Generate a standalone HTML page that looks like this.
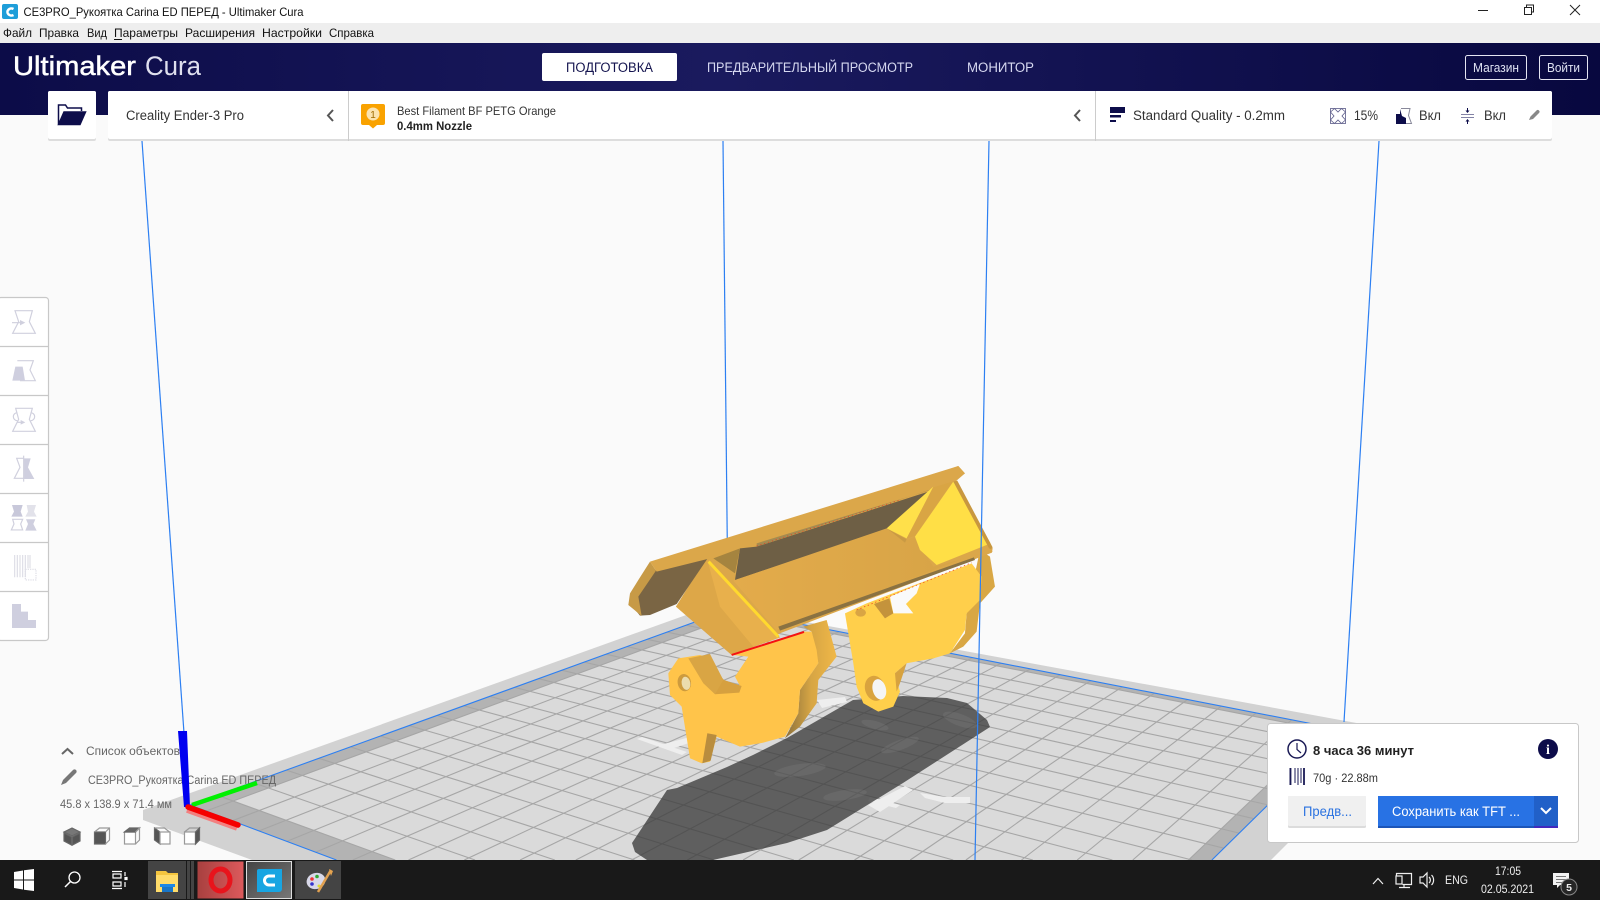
<!DOCTYPE html>
<html lang="ru"><head><meta charset="utf-8"><title>Ultimaker Cura</title>
<style>
html,body{margin:0;padding:0;background:#fafafa;width:1600px;height:900px;overflow:hidden}
svg{display:block;position:absolute;left:0;top:0}
text{font-family:"Liberation Sans","Noto Sans CJK JP",sans-serif;font-size:13px;fill:#222}
</style></head><body>
<svg xmlns="http://www.w3.org/2000/svg" width="1600" height="900" viewBox="0 0 1600 900">
<defs>
<linearGradient id="hd" x1="0" x2="1" y1="0" y2="0"><stop offset="0" stop-color="#0c0c48"/><stop offset=".45" stop-color="#1a1a5e"/><stop offset="1" stop-color="#08083f"/></linearGradient>
<linearGradient id="op" x1="0" x2="1" y1="0" y2="0"><stop offset="0" stop-color="#a8403f"/><stop offset="1" stop-color="#dc5a5c"/></linearGradient>
<linearGradient id="cu" x1="0" x2="1" y1="0" y2="1"><stop offset="0" stop-color="#444"/><stop offset="1" stop-color="#777"/></linearGradient>
<linearGradient id="tube" x1="0" x2="1" y1="0" y2="0"><stop offset="0" stop-color="#e3ab4b"/><stop offset="1" stop-color="#d6a346"/></linearGradient>
<linearGradient id="side" x1="0" x2="1" y1="0" y2="0"><stop offset="0" stop-color="#8a6f3c"/><stop offset=".5" stop-color="#d6a544"/><stop offset="1" stop-color="#f0b848"/></linearGradient>
</defs>
<rect width="1600" height="900" fill="#fafafa"/>

<!-- build plate -->
<polygon points="143,810 714,605 1400,731 1271,860 252,860 143,820" fill="#d2d2d2"/>
<g id="plate"></g>

<!-- floor highlights -->
<g fill="#eeeeee">
<polygon points="637,739 642,737 687,752 682,755"/>
<polygon points="660,745 690,737 695,741 668,750"/>
<polygon points="817,700 845,697 847,702 822,708"/>
<polygon points="868,805 905,786 913,790 880,812"/>
<polygon points="870,797 900,805 896,808 868,801"/>
<polygon points="920,793 945,797 970,797 970,803 945,803 925,798"/>
</g>

<!-- shadow -->
<polygon fill="#3c3c3c" fill-opacity=".78" points="853,700 787,738 753,755 727,767 677,788 667,790 632,843 635,852 647,860 713,860 787,843 827,830 903,783 990,727 987,720 967,703 947,698 903,696"/>
<g fill="#8a8a8a" fill-opacity=".22">
<ellipse cx="800" cy="770" rx="26" ry="6" transform="rotate(-8 800 770)"/>
<ellipse cx="845" cy="795" rx="22" ry="5" transform="rotate(-8 845 795)"/>
<ellipse cx="960" cy="720" rx="18" ry="6" transform="rotate(20 960 720)"/>
<ellipse cx="900" cy="745" rx="20" ry="5" transform="rotate(-20 900 745)"/>
<ellipse cx="875" cy="725" rx="14" ry="4" transform="rotate(15 875 725)"/>
</g>

<!-- vertical line behind model -->
<line x1="723" y1="141" x2="728" y2="610" stroke="#2c7ff2" stroke-width="1.2"/>

<!-- model -->
<g transform="translate(600 450) scale(.3333)">
 <!-- right leg -->
 <polygon fill="#d9a744" points="1050,610 1090,590 1130,545 1140,460 1185,410 1170,320 1140,300 1100,490 1095,550"/>
 <polygon fill="#ffcf4b" points="735,490 760,640 770,710 790,760 835,785 880,770 900,725 885,670 920,640 1000,625 1050,610 1095,540 1100,490 1140,450 1145,380 1115,340 800,460"/>
 <polygon fill="#d7a23f" points="885,670 920,640 900,700 890,725"/>
 <ellipse cx="825" cy="715" rx="30" ry="38" fill="#d9a33e" transform="rotate(-15 825 715)"/>
 <ellipse cx="838" cy="718" rx="20" ry="31" fill="#f5f5f5" transform="rotate(-15 838 718)"/>
 <polygon fill="#fafafa" points="870,440 960,402 950,430 918,462 940,490 880,490"/>
 <polygon fill="#c4933c" points="822,462 868,445 880,490 855,505"/>
 <ellipse cx="782" cy="488" rx="16" ry="12" fill="#d9a544"/>
 <!-- left leg -->
 <polygon fill="url(#side)" points="610,530 680,510 710,620 655,690 650,760 600,830 555,865 595,790 600,720 655,640 635,545"/>
 <polygon fill="#ffc44a" points="205,670 235,625 300,615 330,625 370,690 420,708 405,680 445,620 400,615 610,545 635,545 650,600 655,640 600,720 595,790 555,860 490,878 420,890 350,860 330,935 305,940 270,925 245,770 210,735"/>
 <polygon fill="#d6a03f" points="355,672 372,690 425,708 418,728 345,733"/>
 <polygon fill="#d9a544" points="265,625 330,612 370,690 345,733 310,700"/>
 <ellipse cx="253" cy="698" rx="20" ry="26" fill="#cd9b3e" transform="rotate(-10 253 698)"/>
 <ellipse cx="258" cy="700" rx="13" ry="20" fill="#ebdcae" transform="rotate(-10 258 700)"/>
 <polygon fill="#b98d3e" points="322,850 350,855 332,932 307,940"/>
 <!-- body underlay -->
 <polygon fill="#dba74a" points="320,320 1075,48 1095,70 1060,100 1178,295 1176,308 545,548 395,615 228,470"/>
 <!-- flange -->
 <polygon fill="#7a6544" points="165,360 325,322 230,462 150,495 120,497 90,460 115,400"/>
 <polygon fill="#c79a46" points="150,335 168,362 115,440 125,498 85,465 90,430 115,390"/>
 <polygon fill="#dba74a" points="150,335 1075,48 1095,70 1000,115 470,275 420,295 330,325 170,365"/>
 <polygon fill="#a58a50" points="470,280 985,122 1000,116 470,290"/>
 <!-- interior -->
 <polygon fill="#6e5f45" points="420,295 470,290 985,125 870,235 405,390"/>
 <polygon fill="#a5843f" points="340,325 420,295 405,370"/>
 <!-- tube -->
 <polygon fill="url(#tube)" points="400,392 860,235 920,270 945,260 1000,350 1125,318 530,542"/>
 <polygon fill="#c99a44" points="860,235 920,268 915,278 880,250"/>
 <polygon fill="#ffdf46" points="945,260 1060,95 1172,280 1010,345 960,300"/>
 <polygon fill="#ffe04a" points="860,235 1000,110 920,265"/>
 <polygon fill="#d9a544" points="920,265 1000,112 1058,95 945,258"/>
 <polygon fill="#c8973f" points="1060,95 1072,92 1178,292 1170,300"/>
 <polygon fill="#dba74a" points="530,540 1170,295 1178,305 545,545"/>
 <polygon fill="#8a7242" points="535,530 1122,322 1125,330 540,542"/>
 <!-- left face -->
 <polygon fill="#dda748" points="228,470 322,330 540,562 395,615"/>
 <polygon fill="#e8b04c" points="322,330 410,420 540,562 460,590 360,470"/>
 <line x1="326" y1="335" x2="535" y2="560" stroke="#ffd92e" stroke-width="9"/>
 <!-- red -->
 <line x1="470" y1="288" x2="900" y2="150" stroke="#ef2a1a" stroke-width="2" stroke-dasharray="3 9"/>
 <line x1="395" y1="615" x2="612" y2="546" stroke="#f51212" stroke-width="6"/>
 <line x1="770" y1="480" x2="1115" y2="338" stroke="#ef2a1a" stroke-width="2" stroke-dasharray="4 8"/>
</g>

<!-- front vertical lines + outer verticals -->
<g stroke="#2c7ff2" stroke-width="1.2" fill="none">
<line x1="142" y1="141" x2="184" y2="733"/>
<line x1="1379" y1="141" x2="1344" y2="722"/>
<line x1="989" y1="141" x2="975" y2="860"/>
</g>

<!-- left object list -->
<polyline points="62,754 67.500,749 73,754" fill="none" stroke="#666" stroke-width="2"/>
<text x="86" y="755" font-size="11.500" style="fill:#666;font-size:11.500px" textLength="94" lengthAdjust="spacingAndGlyphs">Список объектов</text>
<path d="M61,785 l2,-5 l10,-10 a2,2 0 0 1 3,3 l-10,10 z" fill="#777"/>
<text x="88" y="784" style="fill:#666;font-size:11.500px" textLength="188" lengthAdjust="spacingAndGlyphs">СЕ3PRO_Рукоятка Carina ED ПЕРЕД</text>
<text x="60" y="808" style="fill:#666;font-size:11.500px" textLength="112" lengthAdjust="spacingAndGlyphs">45.8 x 138.9 x 71.4 мм</text>
<!-- cube icons -->
<g stroke="#666" stroke-width="1.2">
<g><polygon points="72,828 80,832 72,836 64,832" fill="#777"/><polygon points="64,833 71.500,837 71.500,845 64,841" fill="#555"/><polygon points="80,833 72.500,837 72.500,845 80,841" fill="#555"/></g>
<g><rect x="94.500" y="832" width="11" height="12" fill="#555"/><path d="M94.500,832 l5,-4 h10 v12 l-4,4 M105.500,832 l4,-4" fill="none" stroke="#999"/></g>
<g><rect x="124.500" y="832" width="11" height="12" fill="#fff" stroke="#999"/><polygon points="124.500,832 129.500,828 139.500,828 135.500,832" fill="#666"/><path d="M135.500,832 l4,-4 v12 l-4,4" fill="none" stroke="#999"/></g>
<g><polygon points="154.500,828 160,832 160,844 154.500,840" fill="#555"/><rect x="160" y="832" width="10" height="12" fill="#fff" stroke="#999"/><path d="M154.500,828 h10 l5,4" fill="none" stroke="#999"/></g>
<g><rect x="184.500" y="832" width="11" height="12" fill="#fff" stroke="#999"/><path d="M184.500,832 l5,-4 h10 l-4,4" fill="none" stroke="#999"/><polygon points="195.500,832 199.500,828 199.500,840 195.500,844" fill="#555"/></g>
</g>

<!-- axes -->
<polygon points="178,731 187,731 190,807 184,807" fill="#0000f0"/>
<line x1="192" y1="805" x2="257" y2="783" stroke="#00f000" stroke-width="4.500"/>
<line x1="187" y1="810" x2="237" y2="828" stroke="#f28080" stroke-width="5.500"/>
<line x1="188" y1="807" x2="238" y2="825" stroke="#f50000" stroke-width="5.500" stroke-linecap="round"/>

<!-- title bar -->
<rect width="1600" height="23" fill="#fff"/>
<rect x="2" y="4" width="16" height="15" rx="2" fill="#1e9ed9"/>
<path d="M13.500,9 a4,3.500 0 1 0 0,6" fill="none" stroke="#fff" stroke-width="2.500"/>
<text x="23.500" y="16" style="font-size:12px;fill:#111" textLength="280" lengthAdjust="spacingAndGlyphs">СЕ3PRO_Рукоятка Carina ED ПЕРЕД - Ultimaker Cura</text>
<line x1="1478" x2="1488" y1="10.500" y2="10.500" stroke="#222"/>
<path d="M1524.500,7.500 h7 v7 h-7 z M1526.500,7 v-2 h7 v7 h-2" fill="none" stroke="#222"/>
<path d="M1570,5 l10,10 M1580,5 l-10,10" stroke="#222" fill="none"/>
<!-- menu -->
<rect y="23" width="1600" height="20" fill="#eeeeee"/>
<g style="font-size:12px">
<text x="3" y="37" style="font-size:12px;fill:#111" textLength="29" lengthAdjust="spacingAndGlyphs">Файл</text>
<text x="39" y="37" style="font-size:12px;fill:#111" textLength="40" lengthAdjust="spacingAndGlyphs">Правка</text>
<text x="87" y="37" style="font-size:12px;fill:#111" textLength="20" lengthAdjust="spacingAndGlyphs">Вид</text>
<text x="114" y="37" style="font-size:12px;fill:#111" textLength="64" lengthAdjust="spacingAndGlyphs">Параметры</text>
<line x1="114" x2="122" y1="39.500" y2="39.500" stroke="#111"/>
<text x="185" y="37" style="font-size:12px;fill:#111" textLength="70" lengthAdjust="spacingAndGlyphs">Расширения</text>
<text x="262" y="37" style="font-size:12px;fill:#111" textLength="60" lengthAdjust="spacingAndGlyphs">Настройки</text>
<text x="329" y="37" style="font-size:12px;fill:#111" textLength="45" lengthAdjust="spacingAndGlyphs">Справка</text>
</g>

<!-- header -->
<rect y="43" width="1600" height="72" fill="url(#hd)"/>
<text x="13" y="75" style="font-size:27px;fill:#fff;stroke:#fff;stroke-width:.5px" textLength="123" lengthAdjust="spacingAndGlyphs">Ultimaker</text>
<text x="145" y="75" style="font-size:27px;fill:#dfe0ee" textLength="56" lengthAdjust="spacingAndGlyphs">Cura</text>
<rect x="542" y="53" width="135" height="28" rx="2" fill="#fff"/>
<text x="566" y="72" style="font-size:13.500px;fill:#14144f" textLength="87" lengthAdjust="spacingAndGlyphs">ПОДГОТОВКА</text>
<text x="707" y="72" style="font-size:13.500px;fill:#d6d8f0" textLength="206" lengthAdjust="spacingAndGlyphs">ПРЕДВАРИТЕЛЬНЫЙ ПРОСМОТР</text>
<text x="967" y="72" style="font-size:13.500px;fill:#d6d8f0" textLength="67" lengthAdjust="spacingAndGlyphs">МОНИТОР</text>
<rect x="1465.500" y="55.500" width="61" height="24" rx="2" fill="none" stroke="#e5e5f2"/>
<text x="1473" y="72" style="font-size:12.500px;fill:#dfe2f2" textLength="46" lengthAdjust="spacingAndGlyphs">Магазин</text>
<rect x="1539.500" y="55.500" width="48" height="24" rx="2" fill="none" stroke="#e5e5f2"/>
<text x="1547" y="72" style="font-size:12.500px;fill:#dfe2f2" textLength="33" lengthAdjust="spacingAndGlyphs">Войти</text>

<!-- top cards -->
<rect x="48" y="91" width="48" height="50" rx="2" fill="#ddd"/>
<rect x="48" y="91" width="48" height="48" rx="2" fill="#fff"/>
<path d="M58.500,124.500 V105 h7 l2,3 h14 v3 M58.500,124.500 L64,112 H85.500 L80,124.500 Z" fill="none" stroke="#0d0d4a" stroke-width="1.500"/>
<polygon points="59,124.500 64.500,112 85.500,112 80,124.500" fill="#0d0d4a"/>

<rect x="108" y="91" width="1444" height="50" rx="2" fill="#ddd"/>
<rect x="108" y="91" width="1444" height="48" rx="2" fill="#fff"/>
<line x1="348.500" x2="348.500" y1="91" y2="141" stroke="#ccc"/>
<line x1="1095.500" x2="1095.500" y1="91" y2="141" stroke="#ccc"/>
<text x="126" y="120" style="font-size:13.500px;fill:#333" textLength="118" lengthAdjust="spacingAndGlyphs">Creality Ender-3 Pro</text>
<polyline points="333,110 328,115.500 333,121" fill="none" stroke="#555" stroke-width="2"/>
<path d="M363,104 h20 a2,2 0 0 1 2,2 v17 a2,2 0 0 1 -2,2 h-6 l-4,3.500 l-4,-3.500 h-6 a2,2 0 0 1 -2,-2 v-17 a2,2 0 0 1 2,-2z" fill="#f9a200"/>
<circle cx="373" cy="114" r="6.500" fill="#fbe3b0"/>
<text x="373" y="118" text-anchor="middle" style="font-size:10px;fill:#a06a00">1</text>
<text x="397" y="115" style="font-size:12px;fill:#333" textLength="159" lengthAdjust="spacingAndGlyphs">Best Filament BF PETG Orange</text>
<text x="397" y="130" style="font-size:12px;font-weight:bold;fill:#222" textLength="75" lengthAdjust="spacingAndGlyphs">0.4mm Nozzle</text>
<polyline points="1080,110 1075,115.500 1080,121" fill="none" stroke="#555" stroke-width="2"/>

<g fill="#0d0d4a">
<rect x="1110" y="107" width="15" height="6"/><rect x="1110" y="115" width="11" height="2.500"/><rect x="1110" y="120" width="6" height="2"/>
</g>
<text x="1133" y="120" style="font-size:13.500px;fill:#333" textLength="152" lengthAdjust="spacingAndGlyphs">Standard Quality - 0.2mm</text>
<g fill="none" stroke="#5a5a88" stroke-width=".8">
<rect x="1330.500" y="108.500" width="15" height="15"/>
<path d="M1330.500,112 l4,-3.500 M1345.500,112 l-4,-3.500 M1330.500,120 l4,3.500 M1345.500,120 l-4,3.500 M1334.500,108.500 l3.500,3.500 l3.500,-3.500 M1334.500,123.500 l3.500,-3.500 l3.500,3.500 M1330.500,112 l3.500,4 l-3.500,4 M1345.500,112 l-3.500,4 l3.500,4"/>
</g>
<text x="1354" y="120" style="font-size:13.500px;fill:#333" textLength="24" lengthAdjust="spacingAndGlyphs">15%</text>
<path d="M1401,108.500 h9 l-1.500,7 l3,8 h-7" fill="none" stroke="#88889a"/>
<polygon points="1396,124 1396,114 1400,114 1400,109 1402,116 1406,118 1406,124" fill="#0d0d4a"/>
<text x="1419" y="120" style="font-size:13.500px;fill:#333" textLength="22" lengthAdjust="spacingAndGlyphs">Вкл</text>
<g stroke="#5a5a88" fill="none" stroke-width=".8">
<path d="M1461,114.500 h13 M1461,117.500 h13"/>
<path d="M1467.500,108 v3 M1467.500,121 v3" stroke="#0d0d4a" stroke-width="1"/>
<polygon points="1467.500,113 1465.500,110.500 1469.500,110.500" fill="#0d0d4a" stroke="none"/>
<polygon points="1467.500,119 1465.500,121.500 1469.500,121.500" fill="#0d0d4a" stroke="none"/>
</g>
<text x="1484" y="120" style="font-size:13.500px;fill:#333" textLength="22" lengthAdjust="spacingAndGlyphs">Вкл</text>
<path d="M1529,120 l1.500,-3.500 l6,-6 a1.500,1.500 0 0 1 2.500,2.500 l-6,6 z" fill="#888"/>

<!-- left toolbar -->
<rect x="-2" y="297.500" width="50.500" height="343" rx="3" fill="#fff" stroke="#c8c8c8" stroke-width="1.200"/>
<g stroke="#c8c8c8" stroke-width="1.200"><line x1="0" x2="48" y1="346.500" y2="346.500"/><line x1="0" x2="48" y1="395.500" y2="395.500"/><line x1="0" x2="48" y1="444.500" y2="444.500"/><line x1="0" x2="48" y1="493.500" y2="493.500"/><line x1="0" x2="48" y1="542.500" y2="542.500"/><line x1="0" x2="48" y1="591.500" y2="591.500"/></g>
<g transform="translate(0 290) scale(.3333)" fill="none" stroke="#d0d0de" stroke-width="3.500">
<path d="M45,62 H97 L88,95 L106,130 H38 L56,95 Z"/><path d="M36,98 H62"/><polygon points="60,90 76,98 60,106" fill="#d0d0de" stroke="none"/>
<path d="M52,212 H100 L90,240 L106,272 H60"/><polygon points="46,230 68,230 75,272 37,272" fill="#cfcfdf" stroke="none"/>
<path d="M47,355 H97 L88,388 L106,424 H38 L56,388 Z"/><path d="M52,368 a12,12 0 1 0 0,24 M92,368 a12,12 0 1 1 0,24"/><path d="M52,397 H64"/><polygon points="62,390 76,397 62,404" fill="#d0d0de" stroke="none"/>
<path d="M71,505 H50 L60,532 L43,565 H71"/><polygon points="71,505 92,505 84,532 103,567 71,567" fill="#cfcfdf" stroke="none"/><path d="M71,497 V575"/>
<polygon points="36,645 68,645 62,665 68,680 34,680 42,665" fill="#c8c8da" stroke="none"/><polygon points="80,645 108,645 102,665 110,680 76,680 84,665" fill="#e2e2ea" stroke="none"/>
<path d="M38,688 H68 L62,702 L68,720 H34 L42,702 Z"/><polygon points="78,688 106,688 100,702 110,722 76,722 84,702" fill="#cfcfdf" stroke="none"/>
<path d="M44,795 V862 M52,795 V862 M60,795 V862 M68,795 V862 M76,795 V862 M84,795 V835 M90,795 V835" stroke="#dedee6"/>
<rect x="76" y="838" width="32" height="32" stroke-dasharray="4 3" stroke="#dedee6"/>
<polygon points="36,942 63,942 63,965 84,965 84,990 108,990 108,1014 36,1014" fill="#cfcfdf" stroke="none"/>
</g>

<!-- print panel -->
<rect x="1267.500" y="723.500" width="311" height="119" rx="3" fill="#fff" stroke="#c8c8c8"/>
<circle cx="1297" cy="749" r="9" fill="none" stroke="#1a1a55" stroke-width="1.500"/>
<path d="M1297,743 v6.500 l4,3.500" fill="none" stroke="#1a1a55" stroke-width="1.200"/>
<text x="1313" y="755" style="font-size:13px;font-weight:bold;fill:#222" textLength="101" lengthAdjust="spacingAndGlyphs">8 часа 36 минут</text>
<circle cx="1548" cy="749" r="10" fill="#0d0c4a"/>
<text x="1548" y="754" text-anchor="middle" style="font-size:14px;font-weight:bold;fill:#fff;font-family:'Liberation Serif',serif">i</text>
<g stroke="#1a1a55" fill="none">
<path d="M1290,768 v17 M1295,768 v15 M1298,768 v17 M1301,768 v15" stroke-width="1"/>
<path d="M1304,768 v17" stroke-width="1.800"/><path d="M1290.500,768 v17" stroke-width="1.800"/>
</g>
<text x="1313" y="782" style="font-size:11.500px;fill:#333" textLength="65" lengthAdjust="spacingAndGlyphs">70g · 22.88m</text>
<rect x="1288" y="796" width="78" height="32" rx="1.500" fill="#dcdcdc"/>
<rect x="1288" y="796" width="78" height="30" rx="1.500" fill="#f0f0f0"/>
<text x="1303" y="816" style="font-size:13.500px;fill:#2a72e0" textLength="49" lengthAdjust="spacingAndGlyphs">Предв...</text>
<rect x="1378" y="796" width="156" height="32" fill="#1c55b8"/>
<rect x="1378" y="796" width="156" height="30" fill="#2872e4"/>
<rect x="1534" y="796" width="24" height="32" fill="#4329bd"/>
<rect x="1534" y="796" width="24" height="30" fill="#2160c8"/>
<text x="1392" y="816" style="font-size:13.500px;fill:#fff" textLength="128" lengthAdjust="spacingAndGlyphs">Сохранить как TFT ...</text>
<polyline points="1541,808 1546,813 1551,808" fill="none" stroke="#fff" stroke-width="2"/>

<!-- taskbar -->
<rect y="860" width="1600" height="40" fill="#191919"/>
<g fill="#fff">
<polygon points="14,872 23,870.500 23,879.500 14,879.500"/><polygon points="24,870.300 34,869 34,879.500 24,879.500"/>
<polygon points="14,880.500 23,880.500 23,889.500 14,888"/><polygon points="24,880.500 34,880.500 34,891 24,889.700"/>
</g>
<circle cx="74.500" cy="877.500" r="5.500" fill="none" stroke="#fff" stroke-width="1.300"/>
<line x1="70.500" y1="881.500" x2="65" y2="887" stroke="#fff" stroke-width="1.500"/>
<g fill="none" stroke="#fff" stroke-width="1.200">
<path d="M113,874 h8 v4 h-8 z M113,882 h8 v4 h-8 z M112,871.500 h10 M112,888.500 h10"/>
<path d="M125,872 v4 M125,882 v5"/><rect x="125" y="877.500" width="2" height="2" fill="#fff"/>
</g>
<rect x="148" y="861" width="38" height="38" fill="#444"/>
<rect x="187" y="861" width="3" height="38" fill="#444"/><rect x="191" y="861" width="3" height="38" fill="#444"/>
<polygon points="156,871 166,871 168,873 178,873 178,892 156,892" fill="#f4c53f"/>
<polygon points="156,875 178,875 178,892 156,892" fill="#ffdc6a"/>
<rect x="160" y="884" width="15" height="3" fill="#1e88e5"/><rect x="162" y="887" width="11" height="5" fill="#1976c8"/>
<rect x="197.500" y="861.500" width="46" height="37" fill="url(#op)"/>
<ellipse cx="220.500" cy="880" rx="9.500" ry="11" fill="none" stroke="#e8141c" stroke-width="5"/>
<rect x="246.500" y="861.500" width="45" height="37" fill="url(#cu)" stroke="#ddd"/>
<path d="M259,869 h23 v20 a3,3 0 0 1 -3,3 h-22 v-21 a2,2 0 0 1 2,-2z" fill="#18a5e2"/>
<path d="M275,876 h-6 a4,4 0 0 0 0,9 h6" fill="none" stroke="#fff" stroke-width="3"/>
<rect x="295" y="861" width="46" height="38" fill="#444"/>
<ellipse cx="316" cy="881" rx="9.500" ry="8" fill="#d8d8e8" transform="rotate(-15 316 881)"/>
<circle cx="312" cy="879" r="1.800" fill="#e33"/><circle cx="317" cy="876.500" r="1.800" fill="#3a3"/><circle cx="312" cy="884" r="1.800" fill="#33c"/><circle cx="319" cy="886" r="1.500" fill="#dd3"/>
<path d="M331,870 L318,892" stroke="#e0a050" stroke-width="2.500"/><polygon points="329,869 333,871 331,876" fill="#e5a450"/>

<g fill="none" stroke="#eee" stroke-width="1.200">
<polyline points="1373,884 1378,878.500 1383,884"/>
<path d="M1396.500,876.500 v-3 h15 v11 h-9"/><rect x="1396" y="876" width="6" height="8"/><path d="M1404,884 v3 M1399,887.500 h11"/>
<path d="M1420,877 h3 l4,-4 v14 l-4,-4 h-3 z"/><path d="M1429,877 a4,4 0 0 1 0,6 M1431.500,875 a7,7 0 0 1 0,10" />
</g>
<text x="1445" y="884" style="font-size:12px;fill:#eee" textLength="23" lengthAdjust="spacingAndGlyphs">ENG</text>
<text x="1495" y="875" style="font-size:12px;fill:#eee" textLength="26" lengthAdjust="spacingAndGlyphs">17:05</text>
<text x="1481" y="893" style="font-size:12px;fill:#eee" textLength="53" lengthAdjust="spacingAndGlyphs">02.05.2021</text>
<path d="M1553,873 h16 v12 h-9 l-3,3 v-3 h-4 z" fill="#f2f2f2"/>
<g stroke="#777"><path d="M1556,876.500 h10 M1556,879.500 h10 M1556,882.500 h7"/></g>
<circle cx="1569" cy="887" r="8" fill="#262626" stroke="#888"/>
<text x="1569" y="891" text-anchor="middle" style="font-size:10.500px;font-weight:bold;fill:#eee">5</text>
</svg>
<script>
(function(){
var P=[[190,805],[728,610],[1344,730],[970,1098]],Y=860;
var x0=P[0][0],y0=P[0][1],x1=P[1][0],y1=P[1][1],x2=P[2][0],y2=P[2][1],x3=P[3][0],y3=P[3][1];
var sx=x0-x1+x2-x3,sy=y0-y1+y2-y3,dx1=x1-x2,dx2=x3-x2,dy1=y1-y2,dy2=y3-y2,den=dx1*dy2-dx2*dy1;
var g=(sx*dy2-dx2*sy)/den,h=(dx1*sy-sx*dy1)/den;
var a=x1-x0+g*x1,b=x3-x0+h*x3,c=x0,d=y1-y0+g*y1,e=y3-y0+h*y3,f=y0;
function T(u,v){var w=g*u+h*v+1;return [(a*u+b*v+c)/w,(d*u+e*v+f)/w];}
function cross(p,q){var t=(Y-p[1])/(q[1]-p[1]);return [p[0]+t*(q[0]-p[0]),Y];}
function clip(pts){var o=[];for(var i=0;i<pts.length;i++){var p=pts[i],q=pts[(i+1)%pts.length];
 if(p[1]<=Y)o.push(p);
 if((p[1]<=Y)!==(q[1]<=Y))o.push(cross(p,q));}return o;}
function S(p){return p[0].toFixed(1)+','+p[1].toFixed(1);}
function poly(pts,fill){return '<polygon points="'+clip(pts).map(S).join(' ')+'" fill="'+fill+'"/>';}
function seg(p,q,st){if(p[1]>Y&&q[1]>Y)return '';if(p[1]>Y)p=cross(p,q);else if(q[1]>Y)q=cross(p,q);
 return '<line x1="'+p[0].toFixed(1)+'" y1="'+p[1].toFixed(1)+'" x2="'+q[0].toFixed(1)+'" y2="'+q[1].toFixed(1)+'" '+st+'/>';}
var s=poly(P,'#b3b3b3');
var u0=.035,u1=.985,v0=.03,v1=.98;
s+=poly([T(u0,v0),T(u1,v0),T(u1,v1),T(u0,v1)],'#dadada');
var N=20,i,t,L='stroke="#a6a6a6" stroke-width="1.1"';
for(i=0;i<=N;i++){
 t=u0+i*(u1-u0)/N;s+=seg(T(t,0),T(t,1),L);
 t=v0+i*(v1-v0)/N;s+=seg(T(0,t),T(1,t),L);}
var B='stroke="#2c7ff2" stroke-width="1.1"';
s+=seg(P[0],P[1],B)+seg(P[1],P[2],B)+seg(P[2],P[3],B)+seg(P[3],P[0],B);
document.getElementById('plate').innerHTML=s;
})();
</script>
</body></html>
